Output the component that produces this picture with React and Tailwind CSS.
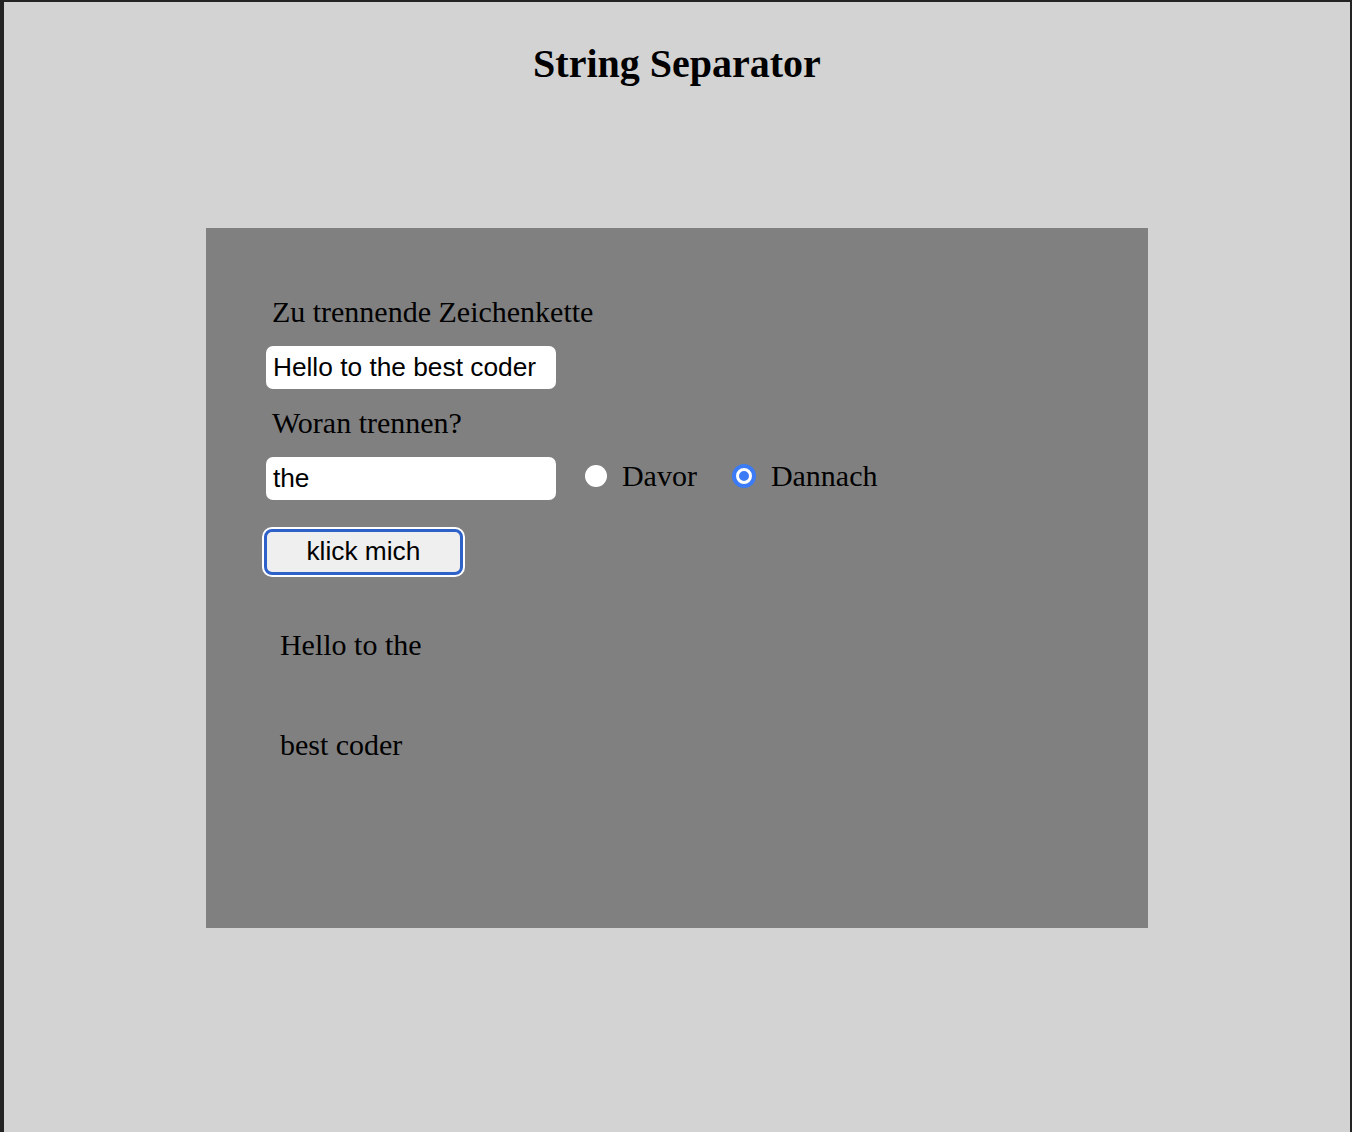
import { useState } from "react";

const serif = "font-['Liberation_Serif','Times_New_Roman',serif]";
const sans = "font-['Liberation_Sans',Arial,sans-serif]";

const Radio = ({ checked, label, onClick }) => (
	<label className="flex items-center cursor-pointer" onClick={onClick}>
		{checked ? (
			<span className="flex h-[24px] w-[24px] items-center justify-center rounded-full bg-[#3b7bf6]">
				<span className="h-[16px] w-[16px] rounded-full border-[3px] border-white bg-[#3b7bf6]" />
			</span>
		) : (
			<span className="h-[22px] w-[22px] rounded-full bg-white" />
		)}
		<span className={`${serif} ml-[15px] text-[30px] leading-[34px] text-black`}>
			{label}
		</span>
	</label>
);

export default function App() {
	const [text, setText] = useState("Hello to the best coder");
	const [sep, setSep] = useState("the");
	const [mode, setMode] = useState("after");

	const parts = ["Hello to the", "best coder"];

	return (
		<div className="min-h-[1132px] border-l-4 border-r-2 border-t-2 border-[#232323] bg-[#d3d3d3]">
			<h1
				className={`${serif} pt-[39px] text-center text-[40px] font-bold leading-[46px] text-black`}
			>
				String Separator
			</h1>

			<div className="mx-auto mt-[141px] flex h-[700px] w-[70%] flex-col items-start bg-[#808080] pl-[60px]">
				<label className={`${serif} mt-[67px] pl-[6px] text-[30px] leading-[34px] text-black`}>
					Zu trennende Zeichenkette
				</label>
				<input
					className={`${sans} mt-[17px] h-[43px] w-[290px] rounded-[7px] bg-white px-[7px] text-[26.3px] text-black outline-none`}
					value={text}
					onChange={(e) => setText(e.target.value)}
				/>

				<label className={`${serif} mt-[17px] pl-[6px] text-[30px] leading-[34px] text-black`}>
					Woran trennen?
				</label>
				<div className="mt-[17px] flex items-center">
					<input
						className={`${sans} h-[43px] w-[290px] rounded-[7px] bg-white px-[7px] text-[26.3px] text-black outline-none`}
						value={sep}
						onChange={(e) => setSep(e.target.value)}
					/>
					<div className="mb-[5px] ml-[29px]">
						<Radio
							checked={mode === "before"}
							label="Davor"
							onClick={() => setMode("before")}
						/>
					</div>
					<div className="mb-[5px] ml-[35px]">
						<Radio
							checked={mode === "after"}
							label="Dannach"
							onClick={() => setMode("after")}
						/>
					</div>
				</div>

				<button
					className={`${sans} ml-[-2px] mt-[29px] h-[46px] w-[199px] rounded-[8px] border-[3px] border-[#2e62c8] bg-[#efefef] pb-[2px] text-[26.3px] leading-none text-black shadow-[0_0_0_2px_white]`}
				>
					klick mich
				</button>

				<div className={`${serif} mt-[53px] pl-[14px] text-[30px] leading-[34px] text-black`}>
					<p>{parts[0]}</p>
					<p className="mt-[66px]">{parts[1]}</p>
				</div>
			</div>
		</div>
	);
}
